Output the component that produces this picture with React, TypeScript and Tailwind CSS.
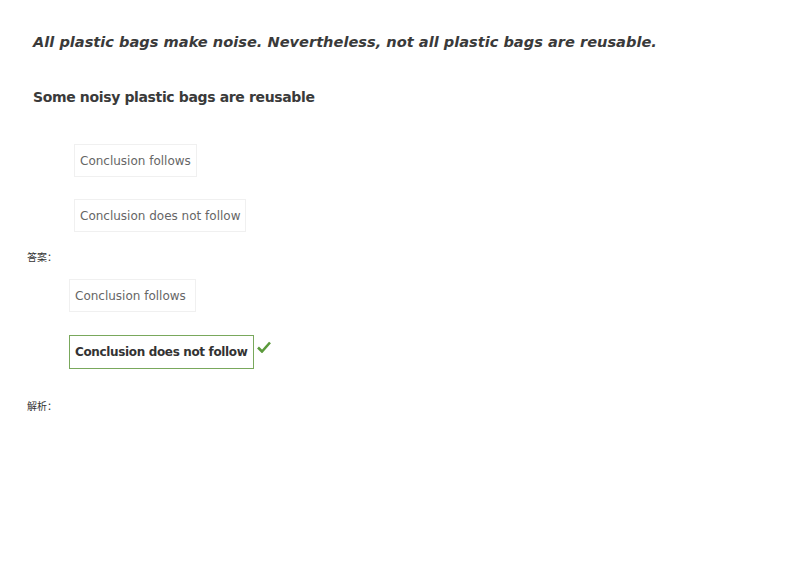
import React from "react";

const font = { fontFamily: '"DejaVu Sans", Verdana, sans-serif' };
const cjk = { fontFamily: '"Noto Sans CJK SC", sans-serif' };

function Opt({ text, correct, wide }: { text: string; correct?: boolean; wide?: boolean }) {
  return (
    <div className="flex items-start">
      <div
        className={
          correct
            ? "h-[34px] flex items-center px-[5px] border border-[#79a85c] text-[#333] font-bold text-[12px] tracking-[-0.35px]"
            : wide
            ? "h-[33px] flex items-center pl-[5px] pr-[9px] border border-[#f0f0f0] text-[#666] text-[12px]"
            : "h-[33px] flex items-center px-[5px] border border-[#f0f0f0] text-[#666] text-[12px]"
        }
      >
        {text}
      </div>
      {correct && (
        <svg width="14" height="12" viewBox="0 0 14 12" className="ml-[3px] mt-[6px]">
          <path d="M1 6.5 L5 10.5 L13 1.5" stroke="#5b9a3c" strokeWidth="2.6" fill="none" strokeLinejoin="miter" />
        </svg>
      )}
    </div>
  );
}

export default function App() {
  return (
    <div className="w-[800px] h-[566px] bg-white text-[#333]" style={font}>
      <div className="pl-[33px] pt-[32px]">
        <div className="text-[14.6px] leading-[20px] font-bold italic text-[#3a3a3a]">
          All plastic bags make noise. Nevertheless, not all plastic bags are reusable.
        </div>
        <div className="mt-[35px] text-[14px] leading-[20px] font-bold text-[#3a3a3a] tracking-[-0.36px]">
          Some noisy plastic bags are reusable
        </div>
      </div>
      <div className="pl-[74px] mt-[37px] flex flex-col gap-[22px]">
        <Opt text="Conclusion follows" />
        <Opt text="Conclusion does not follow" />
      </div>
      <div className="pl-[27px] mt-[18px] text-[10px] leading-[14px] text-[#333]" style={cjk}>
        答案：
      </div>
      <div className="pl-[69px] mt-[15px] flex flex-col gap-[23px]">
        <Opt text="Conclusion follows" wide />
        <Opt text="Conclusion does not follow" correct />
      </div>
      <div className="pl-[27px] mt-[30px] text-[10px] leading-[14px] text-[#333]" style={cjk}>
        解析：
      </div>
    </div>
  );
}
